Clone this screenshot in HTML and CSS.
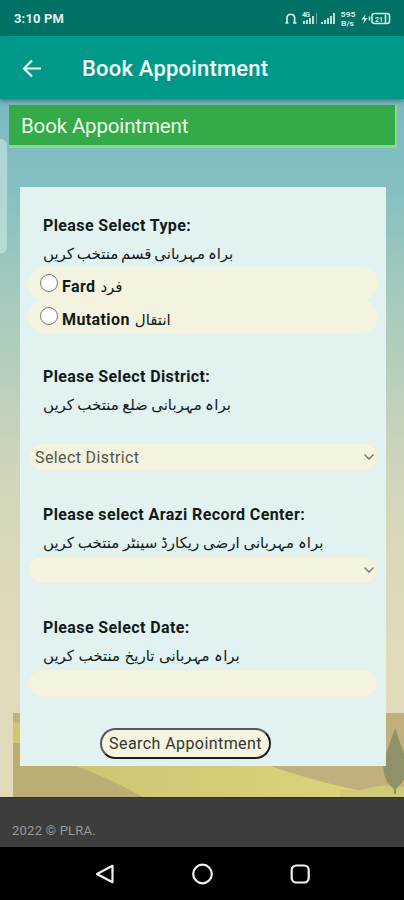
FILE: index.html
```html
<!DOCTYPE html>
<html lang="en">
<head>
<meta charset="utf-8">
<title>Book Appointment</title>
<link rel="stylesheet" href="styles.css">
</head>
<body>
<div class="statusbar">
  <span class="clock">3:10 PM</span>
  <svg class="indicators" width="108" height="20" viewBox="0 0 108 20" fill="none" stroke="#d3ebe7">
    <path d="M3 13.5V8a4 4 0 0 1 7.6 0v5.500M1.500 14h3M9 14h3.500" stroke-width="1.700"/>
    <path d="M20 15v-3M23 15v-4M26 15V9M29 15V7" stroke-width="1.800"/>
    <path d="M32.500 15V4" stroke="#6ba69e" stroke-width="1"/>
    <path d="M38 15v-2M41 15v-4M44 15V9M47 15V7M50 15V4" stroke-width="1.800"/>
    <g fill="#d3ebe7" stroke="none" class="tiny">
      <text x="18" y="7.500" textLength="8">4G</text>
      <text x="56.500" y="8" textLength="15" lengthAdjust="spacingAndGlyphs">595</text>
      <text x="57" y="17" textLength="13" lengthAdjust="spacingAndGlyphs">B/s</text>
      <text x="91" y="12.500" textLength="8">21</text>
    </g>
    <path d="M81.500 5l-4 5.500h3L79 15l4.500-6h-3z" fill="#e7f5f2" stroke="none"/>
    <rect x="88" y="4.500" width="17.500" height="10" rx="2.500" stroke-width="1.600"/>
    <path d="M85.500 7.500v4M101.500 5v9" stroke-width="1.600"/>
  </svg>
</div>
<header class="appbar">
  <svg class="back" width="22" height="22" viewBox="0 0 22 22" fill="none" stroke="#eefaf7" stroke-width="2.200"><path d="M20 10.500H3.500M11 2.500L3 10.500l8 8"/></svg>
  <h1>Book Appointment</h1>
</header>
<main class="page">
  <svg class="scenery" width="404" height="87" viewBox="0 0 404 87">
    <defs>
      <linearGradient id="hill"><stop offset="0" stop-color="#ccc473"/><stop offset="1" stop-color="#dbd47b"/></linearGradient>
    </defs>
    <path d="M13 3H404V87H13z" fill="#bfb07d"/>
    <path d="M13 12l15 1v20H13z" fill="#d0c66f"/>
    <path d="M13 33H65L145 87H13z" fill="#bbae74"/>
    <path d="M60 50L73 55Q105 66 143 87H362V81Q320 73 264 54z" fill="url(#hill)"/>
    <path d="M340 87V80L362 80Q385 73 404 77V87z" fill="#cfca78"/>
    <path d="M395 18L386 44Q378 67 394 79V84h2v-5Q412 65 404 44z" fill="#8f9269"/>
  </svg>
  <div class="handle"></div>
  <h2 class="banner">Book Appointment</h2>
  <form class="card">
    <section class="field">
      <div class="label">Please Select Type:</div>
      <div class="urdu"><span class="tight" lang="ur" dir="rtl">براہ مہربانی قسم منتخب کریں</span></div>
      <label class="option"><input type="radio" name="type"><b>Fard</b><span lang="ur">فرد</span></label>
      <label class="option"><input type="radio" name="type"><b>Mutation</b><span lang="ur">انتقال</span></label>
    </section>
    <section class="field">
      <div class="label">Please Select District:</div>
      <div class="urdu spaced"><span class="snug" lang="ur" dir="rtl">براہ مہربانی ضلع منتخب کریں</span></div>
      <div class="control">Select District<svg width="12" height="8" viewBox="0 0 12 8"><path d="M1.500 1.500L6 6l4.500-4.500"/></svg></div>
    </section>
    <section class="field">
      <div class="label">Please select Arazi Record Center:</div>
      <div class="urdu"><span lang="ur" dir="rtl">براہ مہربانی ارضی ریکارڈ سینٹر منتخب کریں</span></div>
      <div class="control"><svg width="12" height="8" viewBox="0 0 12 8"><path d="M1.500 1.500L6 6l4.500-4.500"/></svg></div>
    </section>
    <section class="field">
      <div class="label">Please Select Date:</div>
      <div class="urdu"><span class="loose" lang="ur" dir="rtl">براہ مہربانی تاریخ منتخب کریں</span></div>
      <div class="control"></div>
    </section>
    <button class="search" type="button">Search Appointment</button>
  </form>
</main>
<footer class="footer">2022 © PLRA.</footer>
<nav class="navbar">
  <svg width="22" height="22" viewBox="0 0 22 22"><path d="M19.500 2.800V19.200L4 11z"/></svg>
  <svg width="22" height="22" viewBox="0 0 22 22"><circle cx="11.500" cy="11" r="9.300"/></svg>
  <svg width="22" height="22" viewBox="0 0 22 22"><rect x="2.700" y="2.500" width="17" height="17" rx="4.500"/></svg>
</nav>
</body>
</html>
```

FILE: styles.css
```css
* { box-sizing: border-box; }
body {
  margin: 0;
  width: 404px;
  height: 900px;
  display: flex;
  flex-direction: column;
  overflow: hidden;
  font-family: Roboto, "DejaVu Sans", sans-serif;
  color: #111a1a;
}
.statusbar {
  height: 36px;
  flex: none;
  display: flex;
  align-items: center;
  justify-content: space-between;
  padding: 1px 12px 0 14px;
  background: #007165;
}
.clock { color: #e3f3f0; font-size: 13px; font-weight: 700; letter-spacing: .15px; }
.tiny { font-size: 7px; font-weight: 700; }
.appbar {
  height: 63px;
  flex: none;
  display: flex;
  align-items: center;
  padding: 2px 0 0 21px;
  background: #009888;
  box-shadow: 0 2px 5px rgba(30, 70, 75, .6);
  z-index: 2;
}
.appbar h1 {
  margin: 0 0 0 39px;
  font-size: 22px;
  font-weight: 500;
  letter-spacing: .2px;
  color: #f4fffd;
}
.page {
  position: relative;
  height: 698px;
  flex: none;
  padding: 6px 7px 0 9px;
  background: linear-gradient(#7cb9c0 0, #84c0c0 90px, #a3c9bd 190px, #b6cebb 270px, #ced5bb 370px, #dbd8ba 460px, #e1dbbb 580px, #e1d9ba 698px);
}
.scenery { position: absolute; left: 0; bottom: 0; }
.handle {
  position: absolute;
  left: 0;
  top: 39px;
  width: 8px;
  height: 117px;
  background: rgba(205, 232, 225, .6);
  border: 1px solid rgba(115, 165, 160, .5);
  border-left: 0;
  border-radius: 0 9px 9px 0;
}
.banner {
  margin: 0;
  height: 43px;
  padding: 2px 0 0 12px;
  line-height: 39px;
  font-size: 20.5px;
  font-weight: 400;
  letter-spacing: -.15px;
  color: #eefbe9;
  background: #34aa49;
  border-right: 2px solid #8fd797;
  border-bottom: 3px solid #8fd797;
}
.card {
  position: relative;
  margin: 39px 0 0 11px;
  width: 366px;
  height: 579px;
  padding: 25px 8px 0;
  background: #e1f2f1;
  display: flex;
  flex-direction: column;
}
.field { margin-bottom: 30px; }
.label {
  height: 28px;
  line-height: 28px;
  padding-left: 15px;
  font-size: 16px;
  font-weight: 700;
  letter-spacing: .39px;
}
.urdu {
  height: 27px;
  line-height: 29px;
  padding-left: 15px;
  font-size: 15px;
  white-space: nowrap;
}
.urdu span { display: inline-block; }
.urdu .tight { word-spacing: -1px; }
.urdu .snug { word-spacing: -.4px; }
.urdu .loose { word-spacing: .8px; }
.spaced { margin-bottom: 25px; }
.option {
  height: 33px;
  display: flex;
  align-items: center;
  gap: 5px;
  padding: 6px 0 0 12px;
  border-radius: 16px;
  background: #f4f3df;
  font-size: 16px;
}
.option b { letter-spacing: .4px; }
.option input {
  appearance: none;
  width: 18px;
  height: 18px;
  margin: -7px -1px 0 0;
  border: 1px solid #777;
  border-radius: 50%;
  background: #fff;
}
.option span { font-size: 15px; }
.control {
  height: 28px;
  width: 350px;
  display: flex;
  align-items: center;
  padding: 0 2px 0 6px;
  border: 1px solid #f1ecdc;
  border-radius: 14px;
  background: #f4f3df;
  font-size: 16px;
  letter-spacing: .38px;
  color: #565748;
}
.control svg { margin-left: auto; }
.control path { fill: none; stroke: #77776b; stroke-width: 1.4; }
.search {
  width: 171px;
  height: 31px;
  margin: 1px 0 0 72px;
  padding: 0;
  border: 2px solid #1b1e1b;
  border-top-color: #565b58;
  border-left-color: #565b58;
  border-radius: 16px;
  background: #f4f4e0;
  font: 16px Roboto, sans-serif;
  letter-spacing: .43px;
  color: #33352e;
}
.footer {
  height: 50px;
  flex: none;
  padding: 19px 0 0 12px;
  line-height: 28px;
  background: #3d3d3d;
  color: #999;
  font-size: 13px;
  letter-spacing: .25px;
  border-top: 1px solid #303033;
}
.navbar {
  height: 53px;
  flex: none;
  display: flex;
  align-items: center;
  gap: 76px;
  padding-left: 93px;
  background: #000;
}
.navbar svg { fill: none; stroke: #f2f2f2; stroke-width: 2.2; stroke-linejoin: round; }
```
